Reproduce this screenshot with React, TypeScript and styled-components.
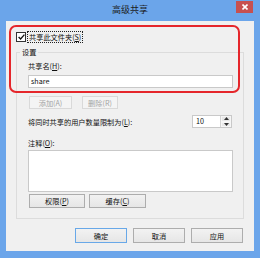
import React from "react";
import styled, { createGlobalStyle } from "styled-components";

const GlobalStyle = createGlobalStyle`
  html, body {
    margin: 0;
    padding: 0;
    background: #6ba5ea;
  }
  body {
    font-family: "Noto Sans CJK SC", "Noto Sans", sans-serif;
    font-size: 7.2px;
    color: #111;
  }
`;

const Window = styled.div`
  width: 260px;
  height: 258px;
  box-sizing: border-box;
  background: #6ba5ea;
  padding: 0 6px 7px 6px;
  display: flex;
  flex-direction: column;
`;

const TitleBar = styled.div`
  height: 21px;
  display: grid;
  grid-template-columns: 1fr auto 1fr;
  align-items: start;
`;

const Title = styled.div`
  grid-column: 2;
  font-size: 9px;
  line-height: 20px;
  color: #1c1c1c;
`;

const CloseButton = styled.div`
  grid-column: 3;
  justify-self: end;
  width: 17px;
  height: 12px;
  margin: 1px 1px 0 0;
  background: #c75050;
  display: flex;
  align-items: center;
  justify-content: center;
`;

const Client = styled.div`
  flex: 1;
  position: relative;
  background: #f0f0f0;
  padding: 10px 10px 8px 10px;
  display: flex;
  flex-direction: column;
`;

const Highlight = styled.div`
  position: absolute;
  left: 3px;
  top: 4px;
  width: 231px;
  height: 68px;
  box-sizing: border-box;
  border: 2px solid #e5262b;
  border-radius: 7px;
  pointer-events: none;
`;

const CheckRow = styled.div`
  height: 12px;
  display: flex;
  align-items: center;
  gap: 1px;
`;

const CheckBox = styled.span`
  width: 8px;
  height: 8px;
  border: 1px solid #333;
  background: #fff;
  display: flex;
  align-items: center;
  justify-content: center;
`;

const FocusLabel = styled.span`
  line-height: 10px;
  padding: 0 1px;
  border: 1px dotted #222;
`;

const Key = styled.span`
  text-decoration: underline;
`;

const GroupBox = styled.fieldset`
  margin: 4px 0 0 0;
  padding: 0;
  min-width: 0;
  border: 1px solid #dcdcdc;
`;

const GroupTitle = styled.legend`
  margin-left: 3px;
  padding: 0 2px;
  line-height: 10px;
  height: 10px;
`;

const GroupBody = styled.div`
  padding: 4px 10px 10px 11px;
  display: flex;
  flex-direction: column;
`;

const Label = styled.div<{ $top?: number }>`
  line-height: 10px;
  height: 10px;
  margin-top: ${(p) => p.$top ?? 0}px;
`;

const TextField = styled.div`
  margin-top: 4px;
  height: 13px;
  box-sizing: border-box;
  border: 1px solid #c9c9c9;
  background: #fff;
  padding: 0 2px;
  line-height: 11px;
`;

const ButtonRow = styled.div<{ $top: number; $gap: number }>`
  display: flex;
  gap: ${(p) => p.$gap}px;
  margin-top: ${(p) => p.$top}px;
  padding-left: 1px;
`;

const Button = styled.div<{ $w: number; $h?: number; $disabled?: boolean; $default?: boolean }>`
  width: ${(p) => p.$w}px;
  height: ${(p) => p.$h ?? 14}px;
  box-sizing: border-box;
  border: 1px solid
    ${(p) => (p.$default ? "#68a8e8" : p.$disabled ? "#d9d9d9" : "#adadad")};
  background: ${(p) =>
    p.$disabled ? "#f4f4f4" : "linear-gradient(#f2f2f2, #e6e6e6)"};
  color: ${(p) => (p.$disabled ? "#a3a3a3" : "#111")};
  display: flex;
  align-items: center;
  justify-content: center;
`;

const LimitRow = styled.div`
  margin-top: 6px;
  height: 13px;
  display: flex;
  align-items: center;
  justify-content: space-between;
`;

const Spin = styled.div`
  width: 40px;
  height: 13px;
  margin-right: 1px;
  box-sizing: border-box;
  border: 1px solid #c9c9c9;
  background: #fff;
  display: flex;
`;

const SpinValue = styled.div`
  flex: 1;
  padding-left: 3px;
  line-height: 11px;
`;

const SpinButtons = styled.div`
  width: 10px;
  display: flex;
  flex-direction: column;
  border-left: 1px solid #d4d4d4;
`;

const SpinArrow = styled.div`
  flex: 1;
  background: #e8e8e8;
  border: 1px solid #f6f6f6;
  display: flex;
  align-items: center;
  justify-content: center;
`;

const TextArea = styled.div`
  margin-top: 2px;
  height: 42px;
  box-sizing: border-box;
  border: 1px solid #c9c9c9;
  background: #fff;
`;

const Footer = styled.div`
  margin-top: 9px;
  margin-right: 1px;
  display: flex;
  justify-content: flex-end;
  gap: 6px;
`;

const Triangle = ({ up }: { up?: boolean }) => (
  <svg width="5" height="3" viewBox="0 0 5 3">
    <path d={up ? "M0 3 L2.5 0 L5 3 Z" : "M0 0 L2.5 3 L5 0 Z"} fill="#333" />
  </svg>
);

export default function App() {
  return (
    <>
      <GlobalStyle />
      <Window>
        <TitleBar>
          <Title>高级共享</Title>
          <CloseButton>
            <svg width="6" height="6" viewBox="0 0 6 6">
              <path d="M0.5 0.5 L5.5 5.5 M5.5 0.5 L0.5 5.5" stroke="#fff" strokeWidth="1.6" />
            </svg>
          </CloseButton>
        </TitleBar>
        <Client>
          <CheckRow>
            <CheckBox>
              <svg width="7" height="6" viewBox="0 0 7 6">
                <path d="M0.6 3 L2.6 5 L6.4 0.6" stroke="#111" strokeWidth="1.3" fill="none" />
              </svg>
            </CheckBox>
            <FocusLabel>
              共享此文件夹(<Key>S</Key>)
            </FocusLabel>
          </CheckRow>
          <GroupBox>
            <GroupTitle>设置</GroupTitle>
            <GroupBody>
              <Label>
                共享名(<Key>H</Key>):
              </Label>
              <TextField>share</TextField>
              <ButtonRow $top={8} $gap={10}>
                <Button $w={43} $h={13} $disabled>
                  添加(A)
                </Button>
                <Button $w={36} $h={13} $disabled>
                  删除(R)
                </Button>
              </ButtonRow>
              <LimitRow>
                <span>
                  将同时共享的用户数量限制为(<Key>L</Key>):
                </span>
                <Spin>
                  <SpinValue>10</SpinValue>
                  <SpinButtons>
                    <SpinArrow>
                      <Triangle up />
                    </SpinArrow>
                    <SpinArrow>
                      <Triangle />
                    </SpinArrow>
                  </SpinButtons>
                </Spin>
              </LimitRow>
              <Label $top={10}>
                注释(<Key>O</Key>):
              </Label>
              <TextArea />
              <ButtonRow $top={2} $gap={4}>
                <Button $w={56}>
                  权限(<Key>P</Key>)
                </Button>
                <Button $w={57}>
                  缓存(<Key>C</Key>)
                </Button>
              </ButtonRow>
            </GroupBody>
          </GroupBox>
          <Footer>
            <Button $w={52} $h={15} $default>
              确定
            </Button>
            <Button $w={52} $h={15}>
              取消
            </Button>
            <Button $w={52} $h={15}>
              应用
            </Button>
          </Footer>
          <Highlight />
        </Client>
      </Window>
    </>
  );
}
